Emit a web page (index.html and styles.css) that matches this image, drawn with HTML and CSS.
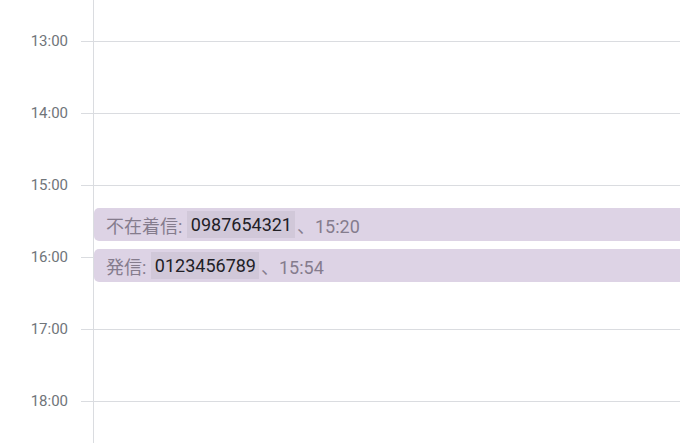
FILE: index.html
```html
<!DOCTYPE html>
<html lang="ja">
<head>
<meta charset="utf-8">
<title>Calendar</title>
<link rel="stylesheet" href="styles.css">
</head>
<body>
<div class="calendar">
  <div class="times">
    <div class="slot"><span class="label">13:00</span><span class="tick"></span></div>
    <div class="slot"><span class="label">14:00</span><span class="tick"></span></div>
    <div class="slot"><span class="label">15:00</span><span class="tick"></span></div>
    <div class="slot"><span class="label">16:00</span><span class="tick"></span></div>
    <div class="slot"><span class="label">17:00</span><span class="tick"></span></div>
    <div class="slot"><span class="label">18:00</span><span class="tick"></span></div>
  </div>
  <div class="day">
    <div class="hour"><span class="rule"></span></div>
    <div class="hour"><span class="rule"></span></div>
    <div class="hour"><span class="rule"></span></div>
    <div class="hour"><span class="rule"></span></div>
    <div class="hour"><span class="rule"></span></div>
    <div class="hour"><span class="rule"></span></div>
    <div class="event" style="top:208px">不在着信: <span class="num">0987654321</span>、15:20</div>
    <div class="event" style="top:249px">発信: <span class="num">0123456789</span>、15:54</div>
  </div>
</div>
</body>
</html>
```
FILE: styles.css
```css
html, body {
  margin: 0;
  padding: 0;
  background: #fff;
  overflow: hidden;
}
body {
  font-family: Roboto, "Noto Sans CJK JP", sans-serif;
}
.calendar {
  display: flex;
  height: 443px;
}
.times {
  width: 93px;
  padding-top: 5px;
  flex: none;
}
.slot {
  height: 72px;
  display: flex;
  align-items: center;
}
.label {
  width: 68px;
  margin-right: 13px;
  text-align: right;
  font-size: 15px;
  color: #70757a;
}
.tick {
  flex: 1;
  height: 1px;
  background: #dadce0;
}
.day {
  flex: 1;
  position: relative;
  border-left: 1px solid #dadce0;
  padding-top: 5px;
}
.hour {
  height: 72px;
  display: flex;
  align-items: center;
}
.rule {
  flex: 1;
  height: 1px;
  background: #dadce0;
}
.event {
  position: absolute;
  left: 0;
  right: -8px;
  height: 33px;
  box-sizing: border-box;
  padding-left: 12px;
  display: flex;
  align-items: center;
  background: #ddd3e5;
  border-radius: 5px;
  font-size: 18px;
  color: #857c8d;
  white-space: pre;
}
.num {
  color: #222026;
  background: rgba(0, 0, 0, 0.05);
  padding: 3px 3px 3px 4px;
  margin-right: 2px;
}
```
